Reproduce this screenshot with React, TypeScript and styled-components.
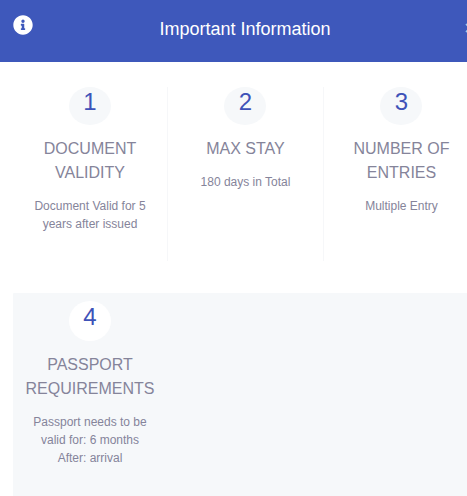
import React from 'react';
import styled, { createGlobalStyle } from 'styled-components';

const GlobalStyle = createGlobalStyle`
  * { box-sizing: border-box; }
  html { overflow: hidden; }
  body {
    margin: 0;
    background: #fff;
    color: #85849a;
    font-family: "Liberation Sans", Arial, sans-serif;
  }
`;

const Page = styled.main`
  width: 467px;
  height: 496px;
  overflow: hidden;
`;

const Header = styled.header`
  display: grid;
  grid-template-columns: 20px 1fr 20px;
  align-items: start;
  width: 480px;
  height: 62px;
  padding: 15px 0 0 13px;
  background: #3e58bb;
  color: #fff;
`;

const Title = styled.h1`
  margin: 2px 0 0;
  padding-right: 3px;
  font-size: 18px;
  font-weight: 400;
  line-height: 24px;
  text-align: center;
`;

const InfoIcon = styled.svg`
  display: block;
  width: 20px;
  height: 20px;
`;

const CloseIcon = styled.svg`
  display: block;
  width: 10px;
  height: 10px;
  margin: 8px 0 0 5px;
  justify-self: start;
`;

const Row = styled.section<{ $shaded?: boolean }>`
  display: grid;
  grid-template-columns: 155px 156px 156px;
  width: 467px;
  height: ${(p) => (p.$shaded ? '203px' : '174px')};
  margin: ${(p) => (p.$shaded ? '32px 0 0 13px' : '25px 0 0 13px')};
  padding-top: ${(p) => (p.$shaded ? '8px' : '0')};
  background: ${(p) => (p.$shaded ? '#f6f8fa' : '#fff')};
  border-top-left-radius: ${(p) => (p.$shaded ? '1px' : '0')};
`;

const Badge = styled.div<{ $light?: boolean }>`
  width: 42px;
  height: ${(p) => (p.$light ? '40px' : '38px')};
  padding-top: ${(p) => (p.$light ? '1px' : '0')};
  border-radius: 50%;
  background: ${(p) => (p.$light ? '#fff' : '#f6f8fa')};
  color: #3e52b8;
  font-size: 24px;
  line-height: 30px;
`;

const Column = styled.article<{ $divided?: boolean }>`
  display: flex;
  flex-direction: column;
  align-items: center;
  border-right: 1px solid ${(p) => (p.$divided ? '#f6f7f9' : 'transparent')};
  text-align: center;

  &:not(:first-child) ${Badge} {
    margin-right: 1px;
    padding-left: 1px;
  }
`;

const Heading = styled.h2`
  margin: 12px 0;
  font-size: 16px;
  font-weight: 400;
  line-height: 24px;
  white-space: nowrap;
`;

const Detail = styled.p`
  margin: 0;
  font-size: 12px;
  line-height: 18px;
  white-space: nowrap;
`;

const Lines = ({ items }: { items: string[] }) => (
  <>
    {items.map((line, i) => (
      <React.Fragment key={line}>
        {i > 0 && <br />}
        {line}
      </React.Fragment>
    ))}
  </>
);

interface CardProps {
  number: number;
  heading: string[];
  detail: string[];
  divided?: boolean;
  light?: boolean;
}

const Card = ({ number, heading, detail, divided, light }: CardProps) => (
  <Column $divided={divided}>
    <Badge $light={light}>{number}</Badge>
    <Heading><Lines items={heading} /></Heading>
    <Detail><Lines items={detail} /></Detail>
  </Column>
);

export default function App() {
  return (
    <Page>
      <GlobalStyle />
      <Header>
        <InfoIcon viewBox="0 0 512 512" aria-hidden="true">
          <path
            fill="currentColor"
            d="M256 8C119.043 8 8 119.083 8 256c0 136.997 111.043 248 248 248s248-111.003 248-248C504 119.083 392.957 8 256 8zm0 110c23.196 0 42 18.804 42 42s-18.804 42-42 42-42-18.804-42-42 18.804-42 42-42zm56 254c0 6.627-5.373 12-12 12h-88c-6.627 0-12-5.373-12-12v-24c0-6.627 5.373-12 12-12h12v-64h-12c-6.627 0-12-5.373-12-12v-24c0-6.627 5.373-12 12-12h64c6.627 0 12 5.373 12 12v100h12c6.627 0 12 5.373 12 12v24z"
          />
        </InfoIcon>
        <Title>Important Information</Title>
        <CloseIcon viewBox="0 0 10 10" aria-hidden="true">
          <path d="M1 1l8 8M9 1L1 9" stroke="#9bcaf0" strokeWidth="1.7" fill="none" />
        </CloseIcon>
      </Header>
      <Row>
        <Card
          number={1}
          heading={['DOCUMENT', 'VALIDITY']}
          detail={['Document Valid for 5', 'years after issued']}
          divided
        />
        <Card number={2} heading={['MAX STAY']} detail={['180 days in Total']} divided />
        <Card number={3} heading={['NUMBER OF', 'ENTRIES']} detail={['Multiple Entry']} />
      </Row>
      <Row $shaded>
        <Card
          number={4}
          heading={['PASSPORT', 'REQUIREMENTS']}
          detail={['Passport needs to be', 'valid for: 6 months', 'After: arrival']}
          light
        />
      </Row>
    </Page>
  );
}
